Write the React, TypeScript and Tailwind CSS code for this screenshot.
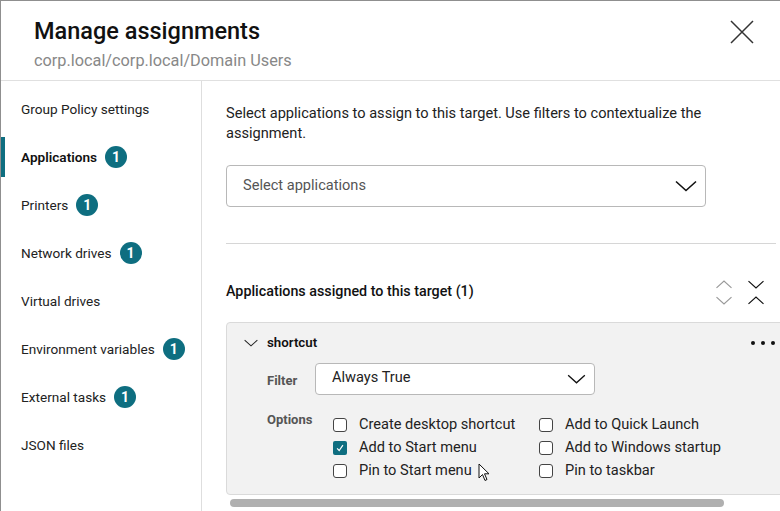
import React from "react";

const navItems = [
  { label: "Group Policy settings" },
  { label: "Applications", count: 1, active: true },
  { label: "Printers", count: 1 },
  { label: "Network drives", count: 1 },
  { label: "Virtual drives" },
  { label: "Environment variables", count: 1 },
  { label: "External tasks", count: 1 },
  { label: "JSON files" },
];

const options = [
  { label: "Create desktop shortcut", checked: false },
  { label: "Add to Quick Launch", checked: false },
  { label: "Add to Start menu", checked: true },
  { label: "Add to Windows startup", checked: false },
  { label: "Pin to Start menu", checked: false },
  { label: "Pin to taskbar", checked: false },
];

function Chevron({ className = "", color = "#111" }: { className?: string; color?: string }) {
  return (
    <svg viewBox="0 0 22 12" className={className} fill="none">
      <path d="M1 1.5 L11 10.5 L21 1.5" stroke={color} strokeWidth="1.6" />
    </svg>
  );
}

function Checkbox({ checked }: { checked: boolean }) {
  if (checked) {
    return (
      <span className="w-[14px] h-[14px] rounded-[2px] bg-[#0e6e80] flex items-center justify-center">
        <svg viewBox="0 0 12 12" className="w-[10px] h-[10px]" fill="none">
          <path d="M2.5 6.5 L5 9 L9.5 2.5" stroke="#fff" strokeWidth="1.4" />
        </svg>
      </span>
    );
  }
  return <span className="w-[14px] h-[14px] rounded-[3px] border-[1.5px] border-[#444] bg-white" />;
}

export default function App() {
  return (
    <div
      className="w-[780px] h-[511px] overflow-hidden bg-white border-t border-l border-[#8f8f8f] flex flex-col text-[#222]"
      style={{ fontFamily: "Roboto, 'Liberation Sans', sans-serif" }}
    >
      {/* header */}
      <div className="h-[80px] flex-shrink-0 border-b border-[#e0e0e0] flex justify-between pl-[33px] pr-[26px]">
        <div className="pt-[15px]">
          <h1 className="text-[23.5px] leading-[30px] font-medium text-[#111]">Manage assignments</h1>
          <p className="mt-[5px] text-[16.3px] leading-[20px] text-[#888]">corp.local/corp.local/Domain Users</p>
        </div>
        <button className="mt-[19px] w-[24px] h-[24px]" aria-label="Close">
          <svg viewBox="0 0 24 24" className="w-[24px] h-[24px]" fill="none">
            <path d="M1 1 L23 23 M23 1 L1 23" stroke="#333" strokeWidth="1.5" />
          </svg>
        </button>
      </div>

      <div className="flex flex-1 min-h-0">
        {/* sidebar */}
        <nav className="w-[201px] flex-shrink-0 border-r border-[#dedede] pt-[4px]">
          {navItems.map((item) => (
            <div key={item.label} className="h-[48px] flex items-center">
              <div
                className={`h-[40px] flex items-center pl-[16px] border-l-[4px] ${
                  item.active ? "border-[#0e6e80] font-semibold text-[#111]" : "border-transparent"
                }`}
              >
                <span className="text-[13.6px]">{item.label}</span>
                {item.count && (
                  <span className="ml-[8px] w-[22px] h-[22px] rounded-full bg-[#0e6e80] text-white text-[14px] font-bold flex items-center justify-center">
                    {item.count}
                  </span>
                )}
              </div>
            </div>
          ))}
        </nav>

        {/* main */}
        <main className="flex-1 overflow-hidden relative flex flex-col">
          <div className="w-[574px] pl-[24px] pt-[22px] flex-1">
            <p className="w-[484px] text-[14.6px] leading-[20px] text-[#222]">
              Select applications to assign to this target. Use filters to contextualize the assignment.
            </p>
            <div className="mt-[22px] w-[480px] h-[42px] border border-[#b8b8b8] rounded-[4px] flex items-center justify-between pl-[16px] pr-[8px]">
              <span className="text-[14.6px] text-[#555]">Select applications</span>
              <Chevron className="w-[22px] h-[12px]" />
            </div>

            <div className="mt-[36px] h-px bg-[#d6d6d6]" />

            <div className="mt-[24px] h-[48px] flex items-center justify-between pr-[11px]">
              <span className="text-[14.3px] font-medium text-[#111]">Applications assigned to this target (1)</span>
              <div className="flex items-center gap-[14px]">
                <div className="flex flex-col gap-[7px]">
                  <Chevron className="w-[18px] h-[9px] rotate-180" color="#999" />
                  <Chevron className="w-[18px] h-[9px]" color="#999" />
                </div>
                <div className="flex flex-col gap-[7px]">
                  <Chevron className="w-[18px] h-[9px]" />
                  <Chevron className="w-[18px] h-[9px] rotate-180" />
                </div>
              </div>
            </div>

            <div className="mt-[6px] w-[570px] bg-[#f2f2f2] border border-[#dadada] rounded-[4px] pb-[16px]">
              <div className="h-[40px] flex items-center justify-between pl-[17px] pr-[20px]">
                <div className="flex items-center gap-[9px]">
                  <Chevron className="w-[14px] h-[8px]" color="#222" />
                  <span className="text-[13.3px] font-semibold text-[#111]">shortcut</span>
                </div>
                <div className="flex gap-[6px]">
                  <span className="w-[4px] h-[4px] rounded-full bg-[#111]" />
                  <span className="w-[4px] h-[4px] rounded-full bg-[#111]" />
                  <span className="w-[4px] h-[4px] rounded-full bg-[#111]" />
                </div>
              </div>

              <div className="flex items-center pl-[40px]">
                <span className="w-[48px] text-[13px] font-bold text-[#555] pt-[3px]">Filter</span>
                <div className="w-[280px] h-[32px] bg-white border border-[#b8b8b8] rounded-[4px] flex items-center justify-between pl-[16px] pr-[8px]">
                  <span className="text-[14.6px] text-[#222] -mt-[2px]">Always True</span>
                  <Chevron className="w-[19px] h-[10px]" />
                </div>
              </div>

              <div className="mt-[17px] flex pl-[40px]">
                <span className="w-[66px] text-[13px] font-bold text-[#555] leading-[16px]">Options</span>
                <div className="mt-[6px] grid grid-cols-[206px_206px] gap-y-[9px]">
                  {options.map((opt) => (
                    <label key={opt.label} className="flex items-center gap-[12px] h-[14px]">
                      <Checkbox checked={opt.checked} />
                      <span className="text-[14.6px] text-[#222]">{opt.label}</span>
                    </label>
                  ))}
                </div>
              </div>
            </div>
          </div>

          {/* horizontal scrollbar */}
          <div className="h-[13px] flex-shrink-0 pl-[28px] pt-[1px]">
            <div className="w-[494px] h-[8px] rounded-full bg-[#b0b0b0]" />
          </div>

          {/* mouse cursor */}
          <svg viewBox="0 0 12 19" className="absolute left-[276px] top-[382px] w-[12px] h-[19px]">
            <path d="M1 1 L1 15 L4.5 11.5 L7 17.5 L9 16.5 L6.5 10.8 L11 10.8 Z" fill="#fff" stroke="#111" strokeWidth="1" strokeLinejoin="round" />
          </svg>
        </main>
      </div>
    </div>
  );
}
